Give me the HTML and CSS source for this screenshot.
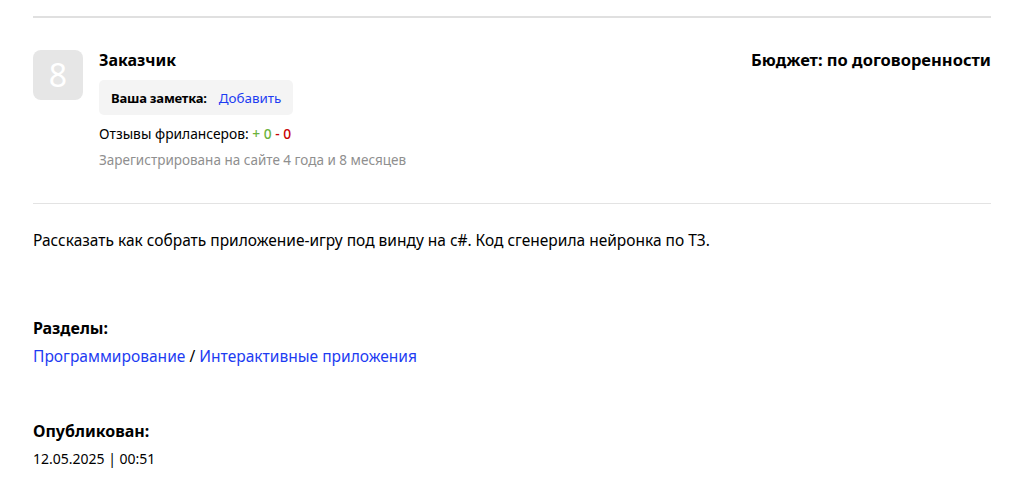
FILE: index.html
```html
<!DOCTYPE html>
<html lang="ru">
<head>
<meta charset="utf-8">
<link rel="stylesheet" href="styles.css">
</head>
<body>
<div class="page">
  <div class="top-rule"></div>
  <div class="header">
    <div class="avatar">8</div>
    <div class="info">
      <div class="name">Заказчик</div>
      <div class="note"><span class="note-label">Ваша заметка:</span><a class="link" href="#">Добавить</a></div>
      <div class="reviews">Отзывы фрилансеров: <span class="plus">+ 0</span> <span class="minus">- 0</span></div>
      <div class="reg">Зарегистрирована на сайте 4 года и 8 месяцев</div>
    </div>
    <div class="budget">Бюджет: по договоренности</div>
  </div>
  <div class="divider"></div>
  <p class="desc">Рассказать как собрать приложение-игру под винду на c#. Код сгенерила нейронка по ТЗ.</p>
  <div class="section-title first">Разделы:</div>
  <div class="section-body"><a class="link" href="#">Программирование</a> / <a class="link" href="#">Интерактивные приложения</a></div>
  <div class="section-title second">Опубликован:</div>
  <div class="section-body date">12.05.2025 | 00:51</div>
</div>
</body>
</html>
```
FILE: styles.css
```css
html, body {
  margin: 0;
  padding: 0;
  background: #fff;
}
body {
  font-family: "Noto Sans", "Liberation Sans", sans-serif;
  color: #000;
}
.page {
  width: 958px;
  margin-left: 33px;
}
.top-rule {
  margin-top: 16px;
  height: 2px;
  background: #e0e0e0;
}
.header {
  display: flex;
  align-items: flex-start;
  padding-top: 32px;
}
.avatar {
  width: 50px;
  height: 50px;
  border-radius: 8px;
  background: #e6e6e6;
  color: #fff;
  font-size: 32px;
  line-height: 50px;
  text-align: center;
  flex: none;
}
.info {
  margin-left: 16px;
  flex: 1;
}
.name {
  font-size: 16px;
  font-weight: 700;
  line-height: 20px;
}
.note {
  display: inline-flex;
  align-items: center;
  gap: 12px;
  margin-top: 10px;
  height: 35px;
  padding: 0 12px;
  border-radius: 5px;
  background: #f4f4f4;
  font-size: 13px;
}
.note-label {
  font-weight: 700;
  letter-spacing: -0.2px;
}
.note .link {
  font-size: 13.4px;
}
.link {
  color: #1d3cf2;
  text-decoration: none;
}
.reviews {
  margin-top: 9px;
  font-size: 13.8px;
  line-height: 20px;
}
.plus { color: #6bb23c; font-weight: 500; }
.minus { color: #c80000; font-weight: 500; }
.reg {
  margin-top: 6px;
  font-size: 13.5px;
  line-height: 20px;
  color: #8f8f8f;
}
.budget {
  font-size: 16.5px;
  font-weight: 700;
  line-height: 20px;
  flex: none;
}
.divider {
  margin-top: 33px;
  height: 1px;
  background: #e3e3e3;
}
.desc {
  margin: 25px 0 0;
  font-size: 15.5px;
  line-height: 22px;
}
.section-title {
  font-size: 16px;
  font-weight: 700;
  line-height: 22px;
}
.section-title.first { margin-top: 66px; }
.section-title.second { margin-top: 53px; }
.section-body {
  margin-top: 6px;
  font-size: 15.55px;
  line-height: 22px;
}
.section-body.date {
  font-size: 14px;
}
```
